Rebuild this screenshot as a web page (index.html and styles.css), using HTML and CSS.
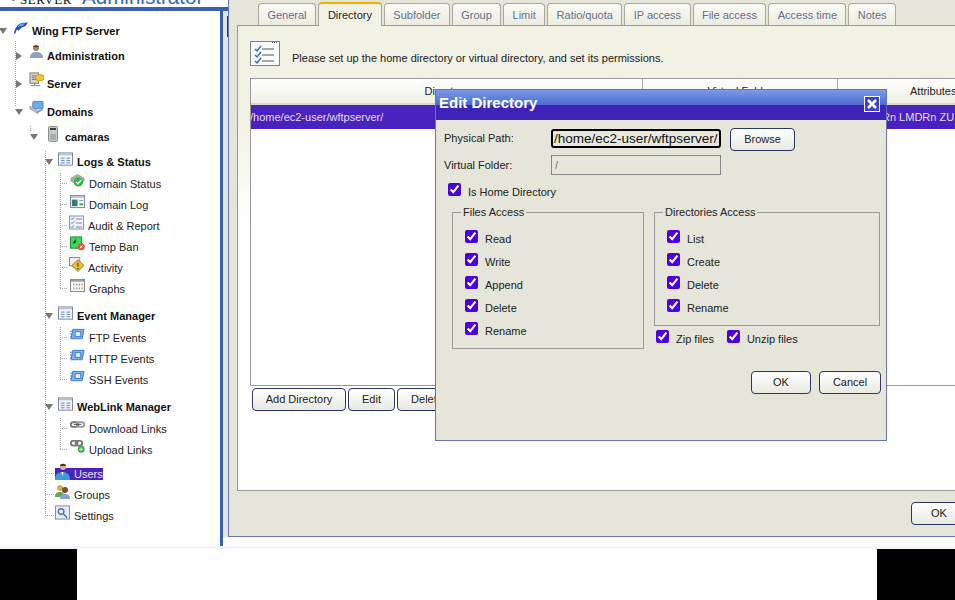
FILE: index.html
```html
<!DOCTYPE html>
<html>
  <head>
    <meta charset="UTF-8">
    <title>Wing FTP Server Administrator</title>
    <link rel="stylesheet" href="styles.css">
  </head>
  <body>
    <svg class="defs" width="0" height="0">
      <symbol id="i-table" viewBox="0 0 16 15">
        <rect x="0.5" y="0.5" width="15" height="13" fill="#f4f6fb" stroke="#7b8294"/>
        <rect x="1" y="1" width="14" height="2" fill="#b9bfcc"/>
        <path d="M3 6h4M9 6h4M3 8.5h4M9 8.5h4M3 11h4M9 11h4" stroke="#5c7fc4"/>
      </symbol>
      <symbol id="i-event" viewBox="0 0 16 13">
        <path d="M3 1h12l-2 10H1z" fill="#7fb0ee" stroke="#3f7ad0"/>
        <rect x="5.5" y="3.5" width="6" height="5" fill="#e6f1fd" stroke="#3f7ad0"/>
        <path d="M0 3h3M0 6h3M0 9h2" stroke="#3f7ad0"/>
      </symbol>
      <symbol id="i-link" viewBox="0 0 16 10">
        <rect x="0.8" y="1.5" width="8" height="5" rx="2.5" fill="none" stroke="#777" stroke-width="2"/>
        <rect x="7.2" y="1.5" width="8" height="5" rx="2.5" fill="none" stroke="#999" stroke-width="2"/>
        <path d="M4 4h8" stroke="#555"/>
      </symbol>
    </svg>

    <div class="app">
      <div class="left">
        <div class="brand">
          <span class="brand-mark">&lt;</span>
          <span class="brand-server">SERVER</span>
          <span class="brand-admin">Administrator</span>
        </div>
        <div class="left-body">
          <div class="tree">
            <div class="row row-root">
              <span class="open"></span>
              <svg class="ico ico-root" viewBox="0 0 16 13">
                <path d="M1 13C2 8 4 3 10 1.500c2-.5 4 0 5.500-1C15 3 14 4.500 12 5.500 9 6.500 7 8 6 10L4 8.500 2.500 13z" fill="#2f3fd0"/>
                <path d="M5 5.500C7 2.500 10 2 13 2L10 5C8 5 6.500 5.500 5 6.500z" fill="#42c4ea"/>
              </svg>
              <b>Wing FTP Server</b>
            </div>

            <div class="rail rail-top">
              <div class="row row-top">
                <span class="shut"></span>
                <svg class="ico" viewBox="0 0 15 15">
                  <circle cx="7" cy="4" r="3" fill="#a9815e"/>
                  <path d="M1 14c0-5 3-6 6-6s7 1 7 6z" fill="#8aa0c4"/>
                  <path d="M4 3c1-2 5-2 6 0z" fill="#4a3a2c"/>
                </svg>
                <b>Administration</b>
              </div>
              <div class="row row-top">
                <span class="shut"></span>
                <svg class="ico" viewBox="0 0 16 16">
                  <rect x="1" y="1" width="9" height="11" fill="#d7d7cf" stroke="#77776f"/>
                  <path d="M3 4h5M3 6h5M3 8h5" stroke="#77776f"/>
                  <path d="M2 14.500h10M6 12v2.500" stroke="#8a8a40"/>
                  <rect x="7" y="3" width="9" height="6" rx="2.500" fill="#f2c530" stroke="#c99a10"/>
                  <path d="M9 9l-1 3 3-3z" fill="#f2c530"/>
                </svg>
                <b>Server</b>
              </div>
              <div class="row row-top">
                <span class="open"></span>
                <svg class="ico" viewBox="0 0 16 15">
                  <rect x="4" y="1" width="11" height="8" rx="1" fill="#5fb0f0" stroke="#6c7f9c"/>
                  <path d="M1 6l8 5v3L1 9z" fill="#b9bdc9" stroke="#8088a0" stroke-width=".6"/>
                  <path d="M9 11l6-2v1l-6 4z" fill="#8e93a6"/>
                </svg>
                <b>Domains</b>
              </div>
            </div>

            <div class="indent">
              <div class="rail rail-domain">
                <div class="row row-domain">
                  <span class="open"></span>
                  <svg class="ico ico-tower" viewBox="0 0 10 16">
                    <rect x="0.5" y="0.5" width="9" height="15" rx="1" fill="#c9ccc9" stroke="#8b8f8b"/>
                    <rect x="2" y="2" width="6" height="2" fill="#3d4146"/>
                    <path d="M2 9h6M2 11h6M2 13h6" stroke="#8b8f8b"/>
                  </svg>
                  <b>camaras</b>
                </div>
              </div>

              <div class="indent">
                <div class="rail rail-long">
                  <div class="row row-group row-first">
                    <span class="open"></span>
                    <svg class="ico ico-group"><use href="#i-table"/></svg>
                    <b>Logs &amp; Status</b>
                  </div>
                  <div class="rail rail-leaves">
                    <div class="row row-leaf row-leaf-first">
                      <span class="stub"></span>
                      <svg class="ico" viewBox="0 0 16 15">
                        <path d="M1 5l7-4 7 4v3l-7 4-7-4z" fill="#a8b0a8" stroke="#7a827a" stroke-width=".6"/>
                        <circle cx="9" cy="9" r="5" fill="#30b948"/>
                        <path d="M6.500 9l2 2 3.500-4" fill="none" stroke="#fff" stroke-width="1.500"/>
                      </svg>
                      <span>Domain Status</span>
                    </div>
                    <div class="row row-leaf">
                      <span class="stub"></span>
                      <svg class="ico" viewBox="0 0 16 14">
                        <rect x="0.500" y="0.500" width="15" height="13" fill="#f6f8f8" stroke="#7b8294"/>
                        <rect x="1" y="1" width="14" height="2" fill="#b9bfcc"/>
                        <rect x="2" y="5" width="6" height="7" fill="#2e7d78"/>
                        <path d="M10 6h4" stroke="#88a"/>
                        <rect x="10" y="9" width="4" height="2" fill="#36a860"/>
                      </svg>
                      <span>Domain Log</span>
                    </div>
                    <div class="row row-leaf">
                      <span class="stub stub-short"></span>
                      <svg class="ico" viewBox="0 0 15 14">
                        <rect x="0.500" y="0.500" width="14" height="13" fill="#eef1f8" stroke="#8a92a8"/>
                        <path d="M2 3l1 1 2-2M2 7l1 1 2-2M2 11l1 1 2-2" fill="none" stroke="#3f70c8"/>
                        <path d="M7 3.500h6M7 7.500h6M7 11.500h6" stroke="#8088a0"/>
                      </svg>
                      <span>Audit &amp; Report</span>
                    </div>
                    <div class="row row-leaf">
                      <span class="stub"></span>
                      <svg class="ico" viewBox="0 0 16 15">
                        <rect x="0.500" y="0.500" width="12" height="12" fill="#34dc58" stroke="#1c8a34"/>
                        <path d="M6 3v4H3" stroke="#14702c"/>
                        <circle cx="12" cy="11" r="3.800" fill="#e2503c"/>
                        <path d="M10.500 9.500l3 3M13.500 9.500l-3 3" stroke="#fff"/>
                      </svg>
                      <span>Temp Ban</span>
                    </div>
                    <div class="row row-leaf">
                      <span class="stub stub-short"></span>
                      <svg class="ico" viewBox="0 0 16 16">
                        <rect x="0.500" y="0.500" width="11" height="9" fill="#eeeeea" stroke="#8a8a8a"/>
                        <path d="M9.500 3l6.500 6-6.500 6.500L3 9z" fill="#e6c02c" stroke="#8a7412" stroke-width=".8"/>
                        <path d="M9.500 6v4.500M8.500 12.500h2" stroke="#333"/>
                      </svg>
                      <span>Activity</span>
                    </div>
                    <div class="row row-leaf">
                      <span class="stub"></span>
                      <svg class="ico" viewBox="0 0 16 14">
                        <rect x="0.500" y="0.500" width="15" height="13" fill="#f6f6f4" stroke="#7b7f88"/>
                        <rect x="1" y="1" width="14" height="2" fill="#9a9ea8"/>
                        <path d="M4 5v2M4 9v2" stroke="#d08a8a" stroke-width="1.500"/>
                        <path d="M7 5v2M7 9v2" stroke="#80b080" stroke-width="1.500"/>
                        <path d="M10 5v2M10 9v2" stroke="#8a90d8" stroke-width="1.500"/>
                        <path d="M13 5v2M13 9v2" stroke="#c8b060" stroke-width="1.500"/>
                      </svg>
                      <span>Graphs</span>
                    </div>
                  </div>

                  <div class="row row-group">
                    <span class="open"></span>
                    <svg class="ico ico-group"><use href="#i-table"/></svg>
                    <b>Event Manager</b>
                  </div>
                  <div class="rail rail-leaves">
                    <div class="row row-leaf row-leaf-first">
                      <span class="stub"></span>
                      <svg class="ico ico-flat"><use href="#i-event"/></svg>
                      <span>FTP Events</span>
                    </div>
                    <div class="row row-leaf">
                      <span class="stub"></span>
                      <svg class="ico ico-flat"><use href="#i-event"/></svg>
                      <span>HTTP Events</span>
                    </div>
                    <div class="row row-leaf">
                      <span class="stub"></span>
                      <svg class="ico ico-flat"><use href="#i-event"/></svg>
                      <span>SSH Events</span>
                    </div>
                  </div>

                  <div class="row row-group">
                    <span class="open"></span>
                    <svg class="ico ico-group"><use href="#i-table"/></svg>
                    <b>WebLink Manager</b>
                  </div>
                  <div class="rail rail-leaves">
                    <div class="row row-leaf row-leaf-first">
                      <span class="stub"></span>
                      <svg class="ico ico-flat"><use href="#i-link"/></svg>
                      <span>Download Links</span>
                    </div>
                    <div class="row row-leaf">
                      <span class="stub"></span>
                      <svg class="ico" viewBox="0 0 16 14">
                        <rect x="1" y="1" width="7" height="5" rx="2.500" fill="none" stroke="#777" stroke-width="2"/>
                        <rect x="6" y="1" width="7" height="5" rx="2.500" fill="none" stroke="#777" stroke-width="2"/>
                        <circle cx="12" cy="10" r="3.700" fill="#3caa50"/>
                        <path d="M12 8v4M10 10h4" stroke="#fff"/>
                      </svg>
                      <span>Upload Links</span>
                    </div>
                  </div>

                  <div class="row row-item row-item-first">
                    <span class="stub stub-item"></span>
                    <span class="selected">
                      <svg class="ico ico-user" viewBox="0 0 15 17">
                        <circle cx="8" cy="4" r="3" fill="#e0b090"/>
                        <path d="M5 3c0-3 6-3 6 0z" fill="#4a3020"/>
                        <path d="M0 17c0-6 3-8 7.500-8S15 11 15 17z" fill="#3f9ad8"/>
                        <path d="M6.500 9h2l-1 4z" fill="#fff"/>
                      </svg>
                      <span>Users</span>
                    </span>
                  </div>
                  <div class="row row-item">
                    <span class="stub stub-item"></span>
                    <svg class="ico" viewBox="0 0 15 15">
                      <circle cx="5" cy="4" r="3" fill="#d8b050"/>
                      <path d="M0 13c0-4 2-5 5-5s4 1 4 5z" fill="#60a850"/>
                      <circle cx="10" cy="6" r="3" fill="#7a5030"/>
                      <path d="M5 15c0-4 2-5 5-5s5 1 5 5z" fill="#8aa0d8"/>
                    </svg>
                    <span>Groups</span>
                  </div>
                  <div class="row row-item">
                    <span class="stub stub-item"></span>
                    <svg class="ico" viewBox="0 0 16 15">
                      <rect x="0.500" y="0.500" width="15" height="14" fill="#e8ecf4" stroke="#8088a0"/>
                      <circle cx="6.500" cy="6.500" r="3" fill="none" stroke="#5070a8" stroke-width="1.400"/>
                      <path d="M9 9l4 4" stroke="#5070a8" stroke-width="1.600"/>
                    </svg>
                    <span>Settings</span>
                  </div>
                </div>
              </div>
            </div>
          </div>
          <div class="divider"></div>
          <div class="strip"><span class="grip"></span></div>
        </div>
      </div>

      <div class="main">
        <div class="tabs">
          <span class="tab">General</span>
          <span class="tab tab-on">Directory</span>
          <span class="tab">Subfolder</span>
          <span class="tab">Group</span>
          <span class="tab">Limit</span>
          <span class="tab">Ratio/quota</span>
          <span class="tab">IP access</span>
          <span class="tab">File access</span>
          <span class="tab">Access time</span>
          <span class="tab">Notes</span>
        </div>
        <div class="panel">
          <div class="intro">
            <svg class="intro-ico" viewBox="0 0 30 25">
              <rect x="0.500" y="0.500" width="29" height="24" fill="#f8fafd" stroke="#7b8294"/>
              <path d="M22 1.500h6" stroke="#555" stroke-dasharray="1 1"/>
              <path d="M5 8l2 2 4-5M5 14l2 2 4-5M5 20l2 2 4-5" fill="none" stroke="#2f6fd0" stroke-width="1.500"/>
              <path d="M12 8h12M12 14h12M12 20h12" stroke="#555"/>
            </svg>
            <span class="intro-text">Please set up the home directory or virtual directory, and set its permissions.</span>
          </div>
          <div class="grid">
            <div class="grid-head">
              <span class="cell cell-dir">Directory</span>
              <span class="cell cell-virt">Virtual Folder</span>
              <span class="cell cell-attr">Attributes</span>
            </div>
            <div class="grid-row">
              <span class="cell cell-dir">/home/ec2-user/wftpserver/</span>
              <span class="cell cell-virt">/</span>
              <span class="cell cell-attr">RWADRn LMDRn ZU</span>
            </div>
          </div>
          <div class="grid-actions">
            <button class="btn btn-add">Add Directory</button>
            <button class="btn btn-edit">Edit</button>
            <button class="btn btn-del">Delete</button>
          </div>
        </div>
        <div class="main-actions">
          <button class="btn btn-main-ok">OK</button>
        </div>
      </div>
    </div>

    <div class="band"></div>
    <div class="bottom">
      <div class="bar bar-l"></div>
      <div class="bar bar-r"></div>
    </div>

    <div class="dialog">
      <div class="dialog-title">
        <span>Edit Directory</span>
        <span class="dialog-close">
          <svg viewBox="0 0 12 12" width="12" height="12"><path d="M2 2l8 8M10 2l-8 8" stroke="#fff" stroke-width="2.600"/></svg>
        </span>
      </div>
      <div class="dialog-body">
        <div class="field field-path">
          <label class="field-label">Physical Path:</label>
          <input class="input input-focus" type="text" value="/home/ec2-user/wftpserver/">
          <button class="btn btn-browse">Browse</button>
        </div>
        <div class="field field-virt">
          <label class="field-label">Virtual Folder:</label>
          <input class="input input-off" type="text" value="/" disabled>
        </div>
        <label class="check check-home"><input type="checkbox" checked><span>Is Home Directory</span></label>

        <div class="access">
          <fieldset class="group">
            <legend>Files Access</legend>
            <label class="check"><input type="checkbox" checked><span>Read</span></label>
            <label class="check"><input type="checkbox" checked><span>Write</span></label>
            <label class="check"><input type="checkbox" checked><span>Append</span></label>
            <label class="check"><input type="checkbox" checked><span>Delete</span></label>
            <label class="check"><input type="checkbox" checked><span>Rename</span></label>
          </fieldset>
          <div class="access-right">
            <fieldset class="group">
              <legend>Directories Access</legend>
              <label class="check"><input type="checkbox" checked><span>List</span></label>
              <label class="check"><input type="checkbox" checked><span>Create</span></label>
              <label class="check"><input type="checkbox" checked><span>Delete</span></label>
              <label class="check"><input type="checkbox" checked><span>Rename</span></label>
            </fieldset>
            <div class="zip">
              <label class="check"><input type="checkbox" checked><span>Zip files</span></label>
              <label class="check"><input type="checkbox" checked><span>Unzip files</span></label>
            </div>
          </div>
        </div>

        <div class="dialog-actions">
          <button class="btn btn-ok">OK</button>
          <button class="btn btn-cancel">Cancel</button>
        </div>
      </div>
    </div>
  </body>
</html>
```

FILE: styles.css
```css
html, body {
  margin: 0;
  padding: 0;
  height: 100%;
  overflow: hidden;
}

body {
  background: white;
  color: #222;
  font-family: "Liberation Sans", Arial, sans-serif;
  font-size: 11px;
}

.defs {
  display: block;
  height: 0;
}

.app {
  display: flex;
  height: 546px;
}

/* left column */
.left {
  width: 228px;
  flex-shrink: 0;
  display: flex;
  flex-direction: column;
}

.brand {
  height: 7px;
  border-bottom: 4px solid #3a5fb0;
  display: flex;
  align-items: flex-start;
  overflow: hidden;
  white-space: nowrap;
}

.brand-mark {
  width: 13px;
  margin-left: 7px;
  margin-top: -8px;
  font-size: 13px;
  line-height: 12px;
}

.brand-server {
  width: 62px;
  margin-top: -6px;
  font-family: "Liberation Serif", serif;
  font-size: 13px;
  line-height: 12px;
  letter-spacing: 0.5px;
  color: #111;
}

.brand-admin {
  margin-top: -13px;
  font-size: 20.6px;
  line-height: 20px;
  color: #3565b8;
}

.left-body {
  flex: 1;
  display: flex;
  min-height: 0;
}

.tree {
  width: 220px;
  flex-shrink: 0;
  padding-top: 9px;
  box-sizing: border-box;
}

.divider {
  width: 3px;
  background: #3a5fb0;
  flex-shrink: 0;
}

.strip {
  width: 5px;
  height: 526px;
  background: #e5e6d9;
  display: flex;
  justify-content: flex-end;
}

.grip {
  width: 1px;
  height: 21px;
  margin-top: 5px;
  background: #2a3566;
}

.row {
  display: flex;
  align-items: center;
  height: 21px;
  white-space: nowrap;
}

.row b {
  font-weight: bold;
  color: #111;
}

.indent {
  margin-left: 15px;
}

.rail {
  margin-left: 15px;
  background: repeating-linear-gradient(#aaa 0 1px, transparent 1px 2px) left top / 1px calc(100% - 10px) no-repeat;
}

.rail-top, .rail-domain {
  background-size: 1px calc(100% - 16px);
}

.open, .shut {
  flex-shrink: 0;
  width: 0;
  height: 0;
  border-style: solid;
  border-color: transparent;
}

.open {
  margin-right: 7px;
  border-width: 6px 4px 0;
  border-top-color: #777;
}

.shut {
  margin-left: 1px;
  margin-right: 7px;
  border-width: 4px 0 4px 6px;
  border-left-color: #777;
}

.row-root .open {
  margin-right: 6px;
  margin-left: -1px;
}

.rail-top {
  padding-top: 4px;
}

.rail-top .row-top {
  margin-top: 7px;
}

.rail-top .row-top:first-child {
  margin-top: 0;
}

.rail-top .open {
  margin-right: 6px;
}

.row-domain {
  margin-top: 4px;
}

.row-group {
  margin-top: 6px;
}

.row-group.row-first {
  margin-top: 4px;
}

.row-leaf-first {
  margin-top: 1px;
}

.row-item-first {
  margin-top: 3px;
}

.ico {
  flex-shrink: 0;
  width: 15px;
  height: 15px;
  margin-top: -6px;
  margin-right: 4px;
}

.row-top .ico {
  margin-right: 3px;
  margin-top: -8px;
}

.row-root .ico {
  margin-right: 4px;
}

.row-domain .ico-tower {
  width: 10px;
  height: 16px;
  margin-left: 3px;
  margin-right: 7px;
}

.ico-group {
  margin-top: -5px;
  margin-left: -2px;
}

.stub {
  flex-shrink: 0;
  width: 7px;
  margin-right: 3px;
  height: 1px;
  background: repeating-linear-gradient(90deg, #aaa 0 1px, transparent 1px 2px);
}

.stub-short {
  margin-right: 2px;
}

.stub-item {
  width: 9px;
  margin-right: 1px;
}

.selected {
  display: flex;
  align-items: center;
  height: 12px;
  background: #4a22c0;
  color: #e8e4fa;
}

.ico-user {
  height: 17px;
  margin-top: -5px;
}

/* main panel */
.main {
  flex: 1;
  min-width: 0;
  height: 537px;
  box-sizing: border-box;
  background: #e5e6d9;
  border-left: 1px solid #6674b8;
  border-bottom: 1px solid #6674b8;
  overflow: hidden;
}

.tabs {
  display: flex;
  gap: 2px;
  height: 23px;
  margin-top: 2px;
  padding-left: 29px;
  align-items: flex-end;
}

.tab {
  height: 22px;
  box-sizing: border-box;
  padding: 0 8.4px;
  line-height: 22px;
  border: 1px solid #a8a89c;
  border-bottom: none;
  border-radius: 4px 4px 0 0;
  background: linear-gradient(#fbfbf6, #ebebdf);
  color: #666f8e;
  white-space: nowrap;
}

.tab-on {
  height: 24px;
  line-height: 23px;
  padding: 0 9px;
  border-top: 2px solid #f0b000;
  color: #222;
  background: #f1f1e4;
  margin-bottom: -1px;
  position: relative;
}

.panel {
  width: 730px;
  height: 466px;
  margin-left: 8px;
  box-sizing: border-box;
  padding: 15px 0 0 12px;
  border: 1px solid #999;
  background: linear-gradient(#f1f1e4 0, #f1f1e4 90px, #fff 200px);
}

.intro {
  display: flex;
  align-items: center;
  gap: 12px;
  margin-bottom: 12px;
}

.intro-ico {
  width: 30px;
  height: 25px;
  flex-shrink: 0;
}

.intro-text {
  padding-top: 9px;
}

.grid {
  width: 760px;
  height: 308px;
  box-sizing: border-box;
  border: 1px solid #999;
  background: white;
}

.grid-head, .grid-row {
  display: flex;
  white-space: nowrap;
}

.grid-head {
  height: 26px;
  line-height: 24px;
  box-sizing: border-box;
  border-bottom: 2px solid #d9d8c8;
  background: linear-gradient(#ffffff, #f0f0e6);
}

.grid-row {
  height: 24px;
  line-height: 24px;
  background: #4a22c0;
  color: #e4def8;
}

.cell-dir {
  width: 392px;
  flex-shrink: 0;
  overflow: hidden;
  box-sizing: border-box;
}

.cell-virt {
  width: 195px;
  flex-shrink: 0;
  box-sizing: border-box;
}

.cell-attr {
  flex: 1;
  box-sizing: border-box;
  padding-left: 11px;
}

.grid-head .cell-dir, .grid-head .cell-virt {
  text-align: center;
  border-right: 1px solid #aaa;
}

.grid-head .cell-attr {
  padding-left: 72px;
}

.grid-row .cell-dir {
  text-indent: -1px;
}

.grid-row .cell-virt {
  text-indent: 8px;
}

.grid-actions {
  display: flex;
  gap: 2px;
  margin-top: 2px;
  margin-left: 2px;
}

.btn {
  height: 23px;
  padding: 0 0 2px;
  box-sizing: border-box;
  border: 1px solid #2a3566;
  border-radius: 4px;
  background: linear-gradient(#ffffff, #e9e9e1);
  color: #222;
  font-family: "Liberation Sans", Arial, sans-serif;
  font-size: 11px;
  flex-shrink: 0;
}

.btn-add { width: 94px; }
.btn-edit { width: 47px; }
.btn-del { width: 60px; }

.main-actions {
  display: flex;
  padding: 11px 0 0 682px;
}

.btn-main-ok { width: 56px; }

/* bottom of the window */
.band {
  height: 3px;
  background: #f2f5fb;
}

.bottom {
  display: flex;
  justify-content: space-between;
  height: 51px;
}

.bar {
  background: black;
}

.bar-l { width: 77px; }
.bar-r { width: 78px; }

/* dialog */
.dialog {
  position: absolute;
  left: 435px;
  top: 89px;
  width: 452px;
  height: 352px;
  box-sizing: border-box;
  border: 1px solid #6674b0;
  background: #e5e6d9;
}

.dialog-title {
  display: flex;
  align-items: flex-start;
  justify-content: space-between;
  height: 30px;
  box-sizing: border-box;
  padding: 4px 6px 0 3px;
  background: linear-gradient(#7c9ae8 0, #4c6bd0 15px, #3f22b8 15px, #3f22b8 30px);
  color: white;
  font-size: 15px;
  font-weight: bold;
  line-height: 18px;
}

.dialog-close {
  display: flex;
  align-items: center;
  justify-content: center;
  width: 16px;
  height: 16px;
  margin-top: 2px;
  box-sizing: border-box;
  border: 1px solid white;
  background: #3f3fd0;
}

.dialog-body {
  padding: 8px 5px 0 8px;
}

.field {
  display: flex;
  align-items: center;
}

.field-label {
  width: 107px;
  flex-shrink: 0;
}

.field-path .field-label {
  margin-bottom: 4px;
}

.input {
  width: 170px;
  height: 19px;
  box-sizing: border-box;
  margin: 0;
  padding: 0 1px;
  font-family: "Liberation Sans", Arial, sans-serif;
  color: #111;
}

.input-focus {
  margin-bottom: 2px;
  border: 2px solid black;
  border-radius: 3px;
  background: #e8e9dd;
  font-size: 13.5px;
}

.input-off {
  height: 20px;
  border: 1px solid #888;
  background: #e5e6d9;
  color: #777;
  font-size: 11px;
  padding: 0 3px;
}

.btn-browse {
  width: 65px;
  margin-left: 9px;
}

.field-virt {
  margin-top: 4px;
}

.check {
  display: flex;
  align-items: flex-start;
  gap: 7px;
  height: 23px;
}

.check input {
  width: 13px;
  height: 13px;
  margin: 0;
  flex-shrink: 0;
  accent-color: #4b00e0;
}

.check span {
  padding-top: 3px;
  line-height: 13px;
}

.check-home {
  margin-top: 8px;
  margin-left: 4px;
  height: 10px;
}

.access {
  display: flex;
  align-items: flex-start;
  gap: 10px;
  margin-top: 13px;
  margin-left: 8px;
}

.group {
  margin: 0;
  min-width: 0;
  padding: 11px 0 3px 12px;
  border: 1px solid #999;
  box-sizing: border-box;
}

.group legend {
  padding: 0 2px;
  margin-left: -4px;
  line-height: 13px;
}

.access > .group {
  width: 192px;
}

.access-right {
  width: 226px;
}

.zip {
  display: flex;
  gap: 13px;
  margin-top: 4px;
  margin-left: 2px;
}

.dialog-actions {
  display: flex;
  justify-content: flex-end;
  gap: 8px;
  margin-top: 18px;
}

.btn-ok { width: 60px; }
.btn-cancel { width: 62px; }
```
